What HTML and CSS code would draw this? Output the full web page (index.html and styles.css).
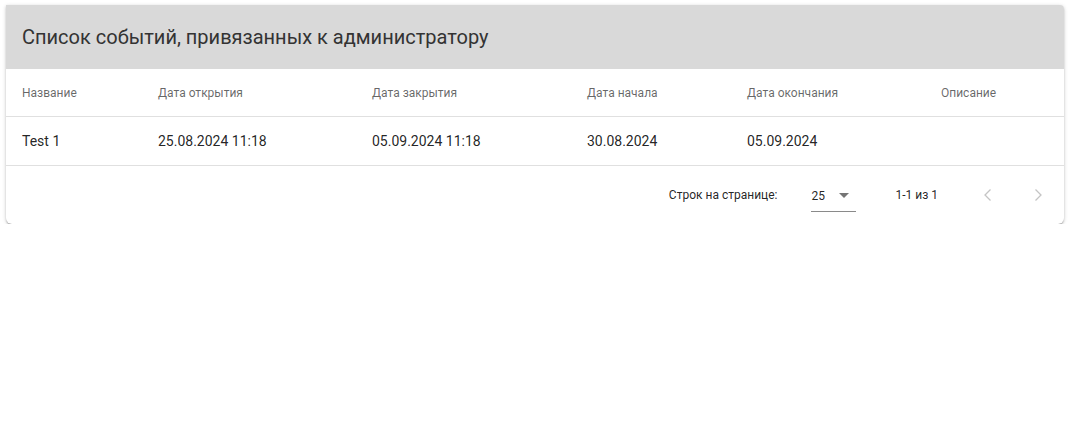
FILE: index.html
```html
<!DOCTYPE html>
<html lang="ru">
<head>
<meta charset="utf-8">
<link rel="stylesheet" href="styles.css">
</head>
<body>
<div class="card">
  <div class="card-header">Список событий, привязанных к администратору</div>
  <div class="table">
    <div class="row head">
      <div class="cell first">Название</div>
      <div class="cell">Дата открытия</div>
      <div class="cell">Дата закрытия</div>
      <div class="cell">Дата начала</div>
      <div class="cell">Дата окончания</div>
      <div class="cell">Описание</div>
    </div>
    <div class="row body">
      <div class="cell first">Test 1</div>
      <div class="cell">25.08.2024 11:18</div>
      <div class="cell">05.09.2024 11:18</div>
      <div class="cell">30.08.2024</div>
      <div class="cell">05.09.2024</div>
      <div class="cell"></div>
    </div>
  </div>
  <div class="paginator">
    <span class="pg-label">Строк на странице:</span>
    <div class="pg-select">
      <span>25</span>
      <svg class="caret" width="10" height="5" viewBox="0 0 10 5"><path d="M0 0L5 5L10 0z" fill="#757575"/></svg>
    </div>
    <span class="pg-range">1-1 из 1</span>
    <div class="pg-btn"><svg width="24" height="24" viewBox="0 0 24 24"><path d="M14.5 6.5L9 12l5.5 5.5" fill="none" stroke="#c4c4c4" stroke-width="1.3"/></svg></div>
    <div class="pg-btn"><svg width="24" height="24" viewBox="0 0 24 24"><path d="M9.5 6.5L15 12l-5.5 5.5" fill="none" stroke="#c4c4c4" stroke-width="1.3"/></svg></div>
  </div>
</div>
</body>
</html>
```

FILE: styles.css
```css
html, body {
  margin: 0;
  padding: 0;
  background: #fff;
}
body {
  padding: 5px 9px 0 6px;
  font-family: Roboto, "Liberation Sans", Arial, sans-serif;
  color: rgba(0,0,0,.87);
}
.card {
  background: #fff;
  border-radius: 0 4px 6px 6px;
  box-shadow: 0 2px 2px -1px rgba(0,0,0,.35), 0 1px 3px 0 rgba(0,0,0,.14), 0 1px 5px 0 rgba(0,0,0,.1);
  overflow: hidden;
}
.card-header {
  background: #d9d9d9;
  height: 64px;
  display: flex;
  align-items: center;
  padding-left: 16px;
  font-size: 20px;
  color: #333;
}
.row {
  display: grid;
  grid-template-columns: 152px 214px 215px 160px 194px 1fr;
  align-items: center;
  border-bottom: 1px solid #e0e0e0;
}
.row.head {
  height: 47px;
  font-size: 12px;
  font-weight: 400;
  color: rgba(0,0,0,.6);
}
.row.body {
  height: 48px;
  font-size: 14px;
  color: rgba(0,0,0,.87);
}
.cell.first {
  padding-left: 16px;
}
.paginator {
  height: 58px;
  display: flex;
  align-items: flex-start;
  justify-content: flex-end;
  padding-right: 2px;
  font-size: 12px;
  color: rgba(0,0,0,.87);
}
.pg-label,
.pg-range {
  line-height: 58px;
}
.pg-label {
  margin-right: 34px;
}
.pg-select {
  width: 45px;
  height: 32px;
  margin-top: 14px;
  box-sizing: border-box;
  border-bottom: 1px solid #8a8a8a;
  display: flex;
  align-items: center;
  justify-content: space-between;
  padding-right: 7px;
}
.pg-range {
  margin-left: 39px;
  margin-right: 26px;
}
.pg-btn {
  width: 48px;
  height: 48px;
  margin-top: 5px;
  display: flex;
  align-items: center;
  justify-content: center;
}
.pg-btn + .pg-btn {
  margin-left: 2px;
}
```
